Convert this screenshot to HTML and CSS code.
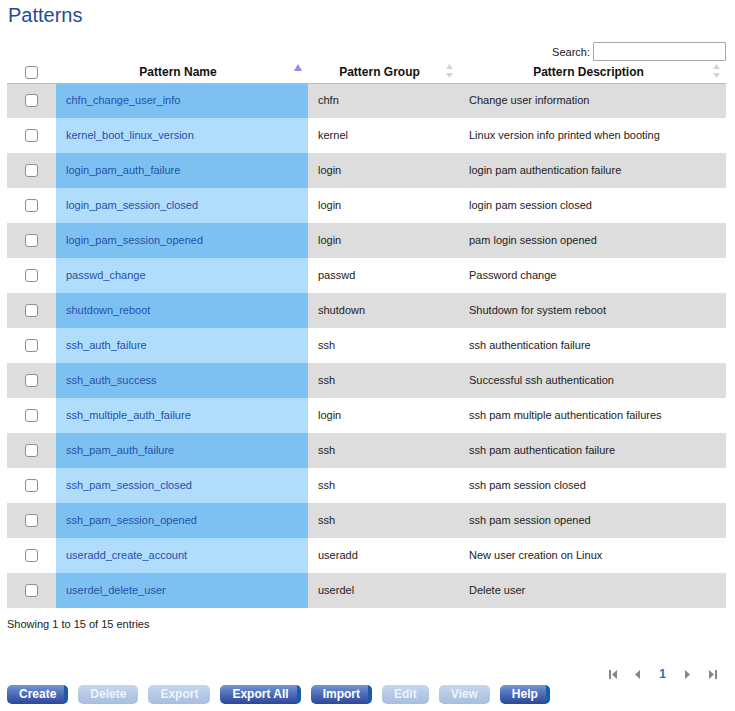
FILE: index.html
```html
<!DOCTYPE html>
<html>
<head>
<meta charset="utf-8">
<title>Patterns</title>
<link rel="stylesheet" href="styles.css">
</head>
<body>
<div class="page">
  <h1 class="title">Patterns</h1>
  <div class="search-row">
    <label class="search-label">Search:</label>
    <input class="search-input" type="text">
  </div>
  <table class="grid">
    <colgroup>
      <col class="c-check"><col class="c-name"><col class="c-group"><col class="c-desc">
    </colgroup>
    <thead>
      <tr>
        <th class="th-check"><input type="checkbox" class="cb"></th>
        <th class="th-sort">Pattern Name
          <svg class="sort-icon" width="8" height="7" viewBox="0 0 8 7"><polygon points="4,0 8,7 0,7" fill="#8d8df2"/></svg>
        </th>
        <th class="th-sort">Pattern Group
          <svg class="sort-both" width="7" height="14" viewBox="0 0 7 14"><polygon points="3.5,0 7,5 0,5" fill="#d4d4d4"/><polygon points="0,9 7,9 3.5,14" fill="#d4d4d4"/></svg>
        </th>
        <th class="th-sort">Pattern Description
          <svg class="sort-both" width="7" height="14" viewBox="0 0 7 14"><polygon points="3.5,0 7,5 0,5" fill="#d4d4d4"/><polygon points="0,9 7,9 3.5,14" fill="#d4d4d4"/></svg>
        </th>
      </tr>
    </thead>
    <tbody>
      <tr class="odd"><td class="td-check"><input type="checkbox" class="cb"></td><td class="td-name">chfn_change_user_info</td><td>chfn</td><td>Change user information</td></tr>
      <tr class="even"><td class="td-check"><input type="checkbox" class="cb"></td><td class="td-name">kernel_boot_linux_version</td><td>kernel</td><td>Linux version info printed when booting</td></tr>
      <tr class="odd"><td class="td-check"><input type="checkbox" class="cb"></td><td class="td-name">login_pam_auth_failure</td><td>login</td><td>login pam authentication failure</td></tr>
      <tr class="even"><td class="td-check"><input type="checkbox" class="cb"></td><td class="td-name">login_pam_session_closed</td><td>login</td><td>login pam session closed</td></tr>
      <tr class="odd"><td class="td-check"><input type="checkbox" class="cb"></td><td class="td-name">login_pam_session_opened</td><td>login</td><td>pam login session opened</td></tr>
      <tr class="even"><td class="td-check"><input type="checkbox" class="cb"></td><td class="td-name">passwd_change</td><td>passwd</td><td>Password change</td></tr>
      <tr class="odd"><td class="td-check"><input type="checkbox" class="cb"></td><td class="td-name">shutdown_reboot</td><td>shutdown</td><td>Shutdown for system reboot</td></tr>
      <tr class="even"><td class="td-check"><input type="checkbox" class="cb"></td><td class="td-name">ssh_auth_failure</td><td>ssh</td><td>ssh authentication failure</td></tr>
      <tr class="odd"><td class="td-check"><input type="checkbox" class="cb"></td><td class="td-name">ssh_auth_success</td><td>ssh</td><td>Successful ssh authentication</td></tr>
      <tr class="even"><td class="td-check"><input type="checkbox" class="cb"></td><td class="td-name">ssh_multiple_auth_failure</td><td>login</td><td>ssh pam multiple authentication failures</td></tr>
      <tr class="odd"><td class="td-check"><input type="checkbox" class="cb"></td><td class="td-name">ssh_pam_auth_failure</td><td>ssh</td><td>ssh pam authentication failure</td></tr>
      <tr class="even"><td class="td-check"><input type="checkbox" class="cb"></td><td class="td-name">ssh_pam_session_closed</td><td>ssh</td><td>ssh pam session closed</td></tr>
      <tr class="odd"><td class="td-check"><input type="checkbox" class="cb"></td><td class="td-name">ssh_pam_session_opened</td><td>ssh</td><td>ssh pam session opened</td></tr>
      <tr class="even"><td class="td-check"><input type="checkbox" class="cb"></td><td class="td-name">useradd_create_account</td><td>useradd</td><td>New user creation on Linux</td></tr>
      <tr class="odd"><td class="td-check"><input type="checkbox" class="cb"></td><td class="td-name">userdel_delete_user</td><td>userdel</td><td>Delete user</td></tr>
    </tbody>
  </table>
  <div class="info">Showing 1 to 15 of 15 entries</div>
  <div class="pager">
    <span class="pg"><svg width="8" height="9" viewBox="0 0 8 9"><rect x="0" y="0" width="2" height="9" fill="#868686"/><polygon points="8,0 8,9 3,4.5" fill="#868686"/></svg></span>
    <span class="pg"><svg width="5" height="9" viewBox="0 0 5 9"><polygon points="5,0 5,9 0,4.5" fill="#868686"/></svg></span>
    <span class="pg pg-num">1</span>
    <span class="pg"><svg width="5" height="9" viewBox="0 0 5 9"><polygon points="0,0 0,9 5,4.5" fill="#868686"/></svg></span>
    <span class="pg"><svg width="8" height="9" viewBox="0 0 8 9"><polygon points="0,0 0,9 5,4.5" fill="#868686"/><rect x="6" y="0" width="2" height="9" fill="#868686"/></svg></span>
  </div>
  <div class="buttons">
    <button class="btn">Create</button>
    <button class="btn btn-off">Delete</button>
    <button class="btn btn-off">Export</button>
    <button class="btn">Export All</button>
    <button class="btn">Import</button>
    <button class="btn btn-off">Edit</button>
    <button class="btn btn-off">View</button>
    <button class="btn">Help</button>
  </div>
</div>
</body>
</html>
```
FILE: styles.css
```css
* { box-sizing: border-box; }
html, body { margin: 0; padding: 0; background: #fff; }
body { font-family: "Liberation Sans", Arial, sans-serif; color: #222; }
.page { width: 726px; padding-left: 7px; }
.title {
  margin: 4px 0 0 1px;
  font-size: 20px;
  line-height: 23px;
  font-weight: normal;
  color: #1f4d96;
}
.search-row {
  margin-top: 15px;
  display: flex;
  justify-content: flex-end;
  align-items: center;
  gap: 3px;
  height: 19px;
}
.search-label { font-size: 11px; color: #222; }
.search-input {
  width: 133px;
  height: 19px;
  border: 1px solid #a9a9a9;
  border-radius: 1px;
  margin: 0;
  padding: 0 2px;
  font-size: 11px;
}
.grid {
  width: 719px;
  table-layout: fixed;
  border-collapse: collapse;
  border-spacing: 0;
}
.c-check { width: 49px; }
.c-name { width: 252px; }
.c-group { width: 151px; }
.c-desc { width: 267px; }
.grid th {
  position: relative;
  height: 22px;
  padding: 1px 18px 0 10px;
  font-size: 12px;
  font-weight: bold;
  color: #111;
  text-align: center;
  border-bottom: 1px solid #bdbdbd;
  vertical-align: middle;
}
.grid th.th-check { padding: 1px 0 0 0; }
.sort-icon { position: absolute; right: 6px; top: 3px; }
.sort-both { position: absolute; right: 6px; top: 3px; }
.grid td {
  height: 35px;
  padding: 0 10px 1px 10px;
  font-size: 11px;
  color: #222;
  vertical-align: middle;
  white-space: nowrap;
  overflow: hidden;
}
.grid td.td-check { padding: 0; text-align: center; }
.cb {
  appearance: none;
  -webkit-appearance: none;
  display: block;
  margin: 0 auto;
  width: 13px;
  height: 13px;
  border: 1px solid #8e8e8e;
  border-radius: 3px;
  background: #fff;
}
.grid tr.odd td { background: #dddddd; }
.grid tr.even td { background: #ffffff; }
.grid tr.odd td.td-name { background: #7dc1f3; }
.grid tr.even td.td-name { background: #b0ddfc; }
.grid td.td-name { color: #2550aa; }
.info {
  margin-top: 10px;
  font-size: 11px;
  line-height: 13px;
  color: #222;
}
.pager {
  margin-top: 37px;
  display: flex;
  justify-content: flex-end;
  padding-right: 1px;
  height: 12px;
}
.pg {
  width: 25px;
  display: flex;
  align-items: center;
  justify-content: center;
}
.pg-num {
  font-size: 12px;
  font-weight: bold;
  color: #1f6db5;
}
.buttons {
  margin-top: 5px;
  display: flex;
  gap: 10px;
}
.btn {
  height: 19px;
  margin: 0;
  padding: 0 12px 0 12px;
  border: 0;
  border-radius: 5px;
  font-family: "Liberation Sans", Arial, sans-serif;
  font-size: 12px;
  font-weight: bold;
  color: #fff;
  background: linear-gradient(to right, rgba(0,0,0,0) 0, rgba(0,0,0,0) calc(100% - 4px), #1c5aa6 calc(100% - 4px)),
              linear-gradient(to bottom, #7394d3 0%, #4a6cb8 50%, #2c4796 100%);
  line-height: 19px;
}
.btn-off {
  color: #eef3fa;
  background: linear-gradient(to bottom, #c6d7ef 0%, #b5c9e6 50%, #a8bedd 100%);
}
```
